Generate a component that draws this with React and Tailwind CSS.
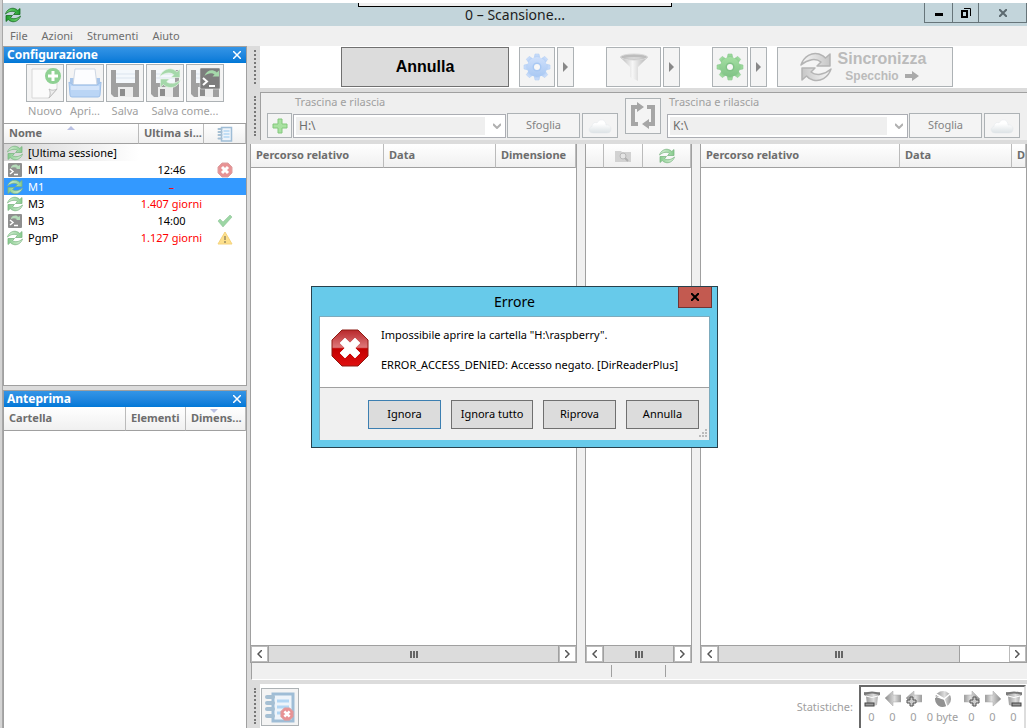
import { useId } from 'react'

const sessions = [
  { name: '[Ultima sessione]', kind: 'sync', when: '', status: '', tint: true },
  { name: 'M1', kind: 'batch', when: '12:46', status: 'error' },
  { name: 'M1', kind: 'sync', when: '–', late: true, status: '', selected: true },
  { name: 'M3', kind: 'sync', when: '1.407 giorni', late: true, status: '' },
  { name: 'M3', kind: 'batch', when: '14:00', status: 'ok' },
  { name: 'PgmP', kind: 'sync', when: '1.127 giorni', late: true, status: 'warn' },
]

const ARROW = 'M1 14C4 5 12 1 19 3C22 4 24 5 25.500 7L30 3V15H17L21 11C16 7 8 8 1 14Z'

function SyncIcon({ className, tone = 'green' }) {
  const id = useId()
  const colors = {
    green: ['#dcf2dc', '#86cb8c', '#79b480'],
    vivid: ['#7be07b', '#1f9a2c', '#14651d'],
    gray: ['#f8f8f8', '#c6c6c6', '#b4b4b4'],
  }[tone]
  return (
    <svg viewBox="0 0 32 32" className={className} aria-hidden="true">
      <defs>
        <linearGradient id={id} x1="0" y1="0" x2="1" y2="0">
          <stop offset="0" stopColor={colors[0]} />
          <stop offset="1" stopColor={colors[1]} />
        </linearGradient>
      </defs>
      <path d={ARROW} fill={`url(#${id})`} stroke={colors[2]} strokeWidth="1.500" strokeLinejoin="round" />
      <path d={ARROW} transform="rotate(180 16 16)" fill={`url(#${id})`} stroke={colors[2]} strokeWidth="1.500" strokeLinejoin="round" />
    </svg>
  )
}

function BatchIcon({ className }) {
  return (
    <svg viewBox="0 0 16 16" className={className} aria-hidden="true">
      <rect x="1" y="1" width="14" height="14" rx="1" fill="#8f8f8f" />
      <path d="M4 5C6 2 10 2 11 4L13 3V7H9L10 6C8 5 6 5 4 6Z" fill="#b4dbb9" />
      <path d="M3 7L6 9.500L3 12M7 12.500H11" fill="none" stroke="#fff" strokeWidth="1.500" />
    </svg>
  )
}

function FloppyIcon({ children }) {
  return (
    <svg viewBox="0 0 36 36" className="size-9" aria-hidden="true">
      <path d="M4 5H32V32H7L4 29Z" fill="#a0a0a0" />
      <path d="M9 5H28V18H9Z" fill="#f4f8fc" />
      <path d="M9 9H28M9 13H28" stroke="#dbe4ee" />
      <path d="M11 22H26V32H11Z" fill="#ececec" />
      <path d="M13 24H18V31H13Z" fill="#8d8d8d" />
      {children}
    </svg>
  )
}

function NewIcon() {
  return (
    <svg viewBox="0 0 36 36" className="size-9" aria-hidden="true">
      <path d="M5 4H30V24L22 33H5Z" fill="#fbfbfb" stroke="#d8d8d8" />
      <path d="M22 33C24 29 23 26 22 24C25 26 28 25 30 24Z" fill="#ededed" stroke="#bcbcbc" />
      <circle cx="26" cy="11" r="8" fill="#8fd193" />
      <path d="M26 6V16M21 11H31" stroke="#fff" strokeWidth="3" />
    </svg>
  )
}

function OpenIcon() {
  return (
    <svg viewBox="0 0 36 36" className="size-9" aria-hidden="true">
      <path d="M3 13H7V20H3ZM29 13H33V20H29Z" fill="#a9c6ea" />
      <path d="M8 4H28L30 20H6Z" fill="#fcfdff" stroke="#cfd8e4" />
      <path d="M2 17L6 20H30L34 17L33 30Q33 32 31 32H5Q3 32 3 30Z" fill="#bad5f5" stroke="#9dbfe8" />
      <path d="M4 21H32V25H4Z" fill="#d3e4fa" />
    </svg>
  )
}

function SaveSyncIcon() {
  return (
    <FloppyIcon>
      <g transform="translate(12 2) scale(0.7)" fill="#a5d8aa" stroke="#edf7ed">
        <path d={ARROW} />
        <path d={ARROW} transform="rotate(180 16 16)" />
      </g>
    </FloppyIcon>
  )
}

function SaveBatchIcon() {
  return (
    <FloppyIcon>
      <rect x="13" y="3" width="20" height="21" rx="1" fill="#7d7d7d" stroke="#eee" strokeWidth="0.500" />
      <g transform="translate(17 4) scale(0.5)" fill="#a5d8aa">
        <path d={ARROW} />
      </g>
      <path d="M16 13L20 16.500L16 20M22 21H28" fill="none" stroke="#fff" strokeWidth="2" />
    </FloppyIcon>
  )
}

function GearIcon({ tone }) {
  const id = useId()
  const [light, dark] = tone === 'blue' ? ['#cfe0fb', '#a8c8f3'] : ['#a4e0a2', '#80c286']
  return (
    <svg viewBox="0 0 28 28" className="size-7" aria-hidden="true">
      <defs>
        <linearGradient id={id} x1="0" y1="0" x2="0" y2="1">
          <stop offset="0" stopColor={light} />
          <stop offset="1" stopColor={dark} />
        </linearGradient>
      </defs>
      <g fill={`url(#${id})`} stroke={dark} strokeWidth="0.500">
        {[0, 45, 90, 135, 180, 225, 270, 315].map((a) => (
          <path key={a} d="M11 6L12 1H16L17 6Z" transform={`rotate(${a} 14 14)`} />
        ))}
        <circle cx="14" cy="14" r="10" stroke="none" />
      </g>
      <circle cx="14" cy="14" r="4.500" fill={dark} />
      <circle cx="14" cy="14" r="3" fill="#f8f8f8" />
    </svg>
  )
}

function FunnelIcon() {
  const id = useId()
  return (
    <svg viewBox="0 0 28 28" className="size-7" aria-hidden="true">
      <defs>
        <linearGradient id={id}>
          <stop offset="0" stopColor="#b5b5b5" />
          <stop offset="0.450" stopColor="#f6f6f6" />
          <stop offset="1" stopColor="#b0b0b0" />
        </linearGradient>
      </defs>
      <path d="M0 4L10 14V24L18 28V14L28 4Z" fill={`url(#${id})`} />
      <ellipse cx="14" cy="4" rx="13.500" ry="3" fill="#bdbdbd" stroke="#dadada" />
      <path d="M4 5Q14 3 24 5Q14 7 4 5Z" fill="#d8d8d8" />
    </svg>
  )
}

function CloudIcon() {
  const id = useId()
  return (
    <svg viewBox="0 0 24 16" className="h-4 w-6" aria-hidden="true">
      <defs>
        <linearGradient id={id} x1="0" y1="0" x2="0" y2="1">
          <stop offset="0.300" stopColor="#fff" />
          <stop offset="1" stopColor="#dce2e5" />
        </linearGradient>
      </defs>
      <path d="M5 15C0 15 0 9 4 8.500C4 5 7 4 9 5C11 0 18 1 18 7C24 6 25 15 19 15Z" fill={`url(#${id})`} stroke="#e2e7ea" strokeWidth="0.500" />
    </svg>
  )
}

function SwapIcon() {
  return (
    <svg viewBox="0 0 28 28" className="size-7" fill="#a6a6a6" aria-hidden="true">
      <path d="M2 3H8V0L15 5L8 10V7H6V20H9V24H2Z" />
      <path d="M26 24H20V27L13 22L20 17V20H22V7H18V3H26Z" />
    </svg>
  )
}

function ErrorBadge({ className }) {
  return (
    <svg viewBox="0 0 16 16" className={className} aria-hidden="true">
      <path d="M5 1H11L15 5V11L11 15H5L1 11V5Z" fill="#e89294" stroke="#dca0a1" />
      <path d="M5 5L11 11M11 5L5 11" stroke="#fff" strokeWidth="3" />
    </svg>
  )
}

function StatusIcon({ status }) {
  if (status === 'error') return <ErrorBadge className="mx-auto size-4" />
  if (status === 'ok') {
    return (
      <svg viewBox="0 0 16 16" className="mx-auto size-4" aria-hidden="true">
        <path d="M1 8L3 6L6 9L13 2L15 4L6 14Z" fill="#9cd6a4" stroke="#86bf90" strokeWidth="0.500" />
      </svg>
    )
  }
  if (status === 'warn') {
    return (
      <svg viewBox="0 0 16 16" className="mx-auto size-4" aria-hidden="true">
        <path d="M8 2L15 14H1Z" fill="#fde08c" stroke="#f5d37d" strokeLinejoin="round" />
        <path d="M8 6V10M8 11V13" stroke="#998b60" strokeWidth="1.500" />
      </svg>
    )
  }
  return null
}

function LogIcon({ className }) {
  return (
    <svg viewBox="0 0 32 32" className={className} aria-hidden="true">
      <path d="M9 3H29V30H9Z" fill="#eef4fa" stroke="#9fbdd6" strokeWidth="3" />
      <path d="M13 10H25M13 16H25M13 22H25" stroke="#b2d6f3" strokeWidth="3" />
      <path d="M3 6H9M3 12H9M3 18H9M3 25H9" stroke="#a5bfd3" strokeWidth="4" strokeLinecap="round" />
    </svg>
  )
}

function CameraIcon() {
  return (
    <svg viewBox="0 0 16 16" className="mx-auto size-4" aria-hidden="true">
      <path d="M0 3H6L7 4H16V14H0Z" fill="#d2d2d2" />
      <circle cx="8" cy="8" r="3" fill="#e4e4e4" stroke="#b8b8b8" />
      <path d="M10 10L13 13" stroke="#b0b0b0" strokeWidth="2" />
    </svg>
  )
}

function CloseX({ className, weight = 1.5 }) {
  return (
    <svg viewBox="0 0 8 8" className={className} fill="none" stroke="currentColor" strokeWidth={weight} aria-hidden="true">
      <path d="M0 0L8 8M8 0L0 8" />
    </svg>
  )
}

function Triangle({ className }) {
  return (
    <svg viewBox="0 0 8 4" className={className} fill="#b9c0e2" aria-hidden="true">
      <path d="M4 0L8 4H0Z" />
    </svg>
  )
}

function Grip() {
  return (
    <div className="flex w-[10px] shrink-0 justify-center py-1">
      <div className="border-l-2 border-dotted border-[#777]" />
    </div>
  )
}

function Caption({ children }) {
  return (
    <div className="flex h-4 shrink-0 items-center justify-between bg-linear-to-b from-[#3495e6] to-[#0078d7] pr-1 pl-[3px] text-white">
      <h2 className="text-xs font-bold">{children}</h2>
      <button aria-label="Chiudi"><CloseX className="m-px size-2" /></button>
    </div>
  )
}

function Th({ children, className = '' }) {
  return (
    <th className={`relative h-full overflow-hidden border-r border-b border-r-[#bbb] border-b-[#a0a0a0] bg-linear-to-b from-white to-[#f0f0f0] px-[5px] text-left text-[11px] font-bold whitespace-nowrap text-[#6d6d6d] ${className}`}>
      {children}
    </th>
  )
}

function ToolButton({ label, className = '', children }) {
  return (
    <button aria-label={label} className={`flex shrink-0 items-center justify-center border border-[#adb2b5] bg-[#f4f4f4] ${className}`}>
      {children}
    </button>
  )
}

function DropArrow({ label }) {
  return (
    <ToolButton label={label} className="ml-0.5 h-10 w-[17px]">
      <svg viewBox="0 0 5 10" className="h-2.5 w-[5px]" fill="#888" aria-hidden="true"><path d="M0 0L5 5L0 10Z" /></svg>
    </ToolButton>
  )
}

function FolderCombo({ value, label, className }) {
  return (
    <div className={`flex h-6 items-center border border-[#abadb3] bg-white p-0.5 ${className}`}>
      <select aria-label={label} className="h-full min-w-0 flex-1 appearance-none bg-[#efefef] pl-[3px] text-xs text-[#6d6d6d]" defaultValue={value}>
        <option>{value}</option>
      </select>
      <svg viewBox="0 0 8 6" className="mr-0.5 ml-2 h-1.5 w-2" fill="none" stroke="#b0b0b0" strokeWidth="2" aria-hidden="true">
        <path d="M0 1L4 5L8 1" />
      </svg>
    </div>
  )
}

function ScrollBar({ thumb = 'w-full' }) {
  const chevron = 'flex w-[17px] shrink-0 items-center justify-center border border-[#bbb] bg-white'
  return (
    <div className="flex h-[18px] shrink-0 border-y border-[#a0a0a0] bg-white">
      <button aria-label="Scorri a sinistra" className={chevron}>
        <svg viewBox="0 0 5 8" className="h-2 w-[5px]" fill="none" stroke="#555" strokeWidth="1.500"><path d="M5 0L1 4L5 8" /></svg>
      </button>
      <div className="min-w-0 flex-1">
        <div className={`flex h-full items-center justify-center gap-px border-x border-[#a0a0a0] bg-[#dcdcdc] ${thumb}`}>
          <span className="h-[7px] w-0.5 bg-[#666]" />
          <span className="h-[7px] w-0.5 bg-[#666]" />
          <span className="h-[7px] w-0.5 bg-[#666]" />
        </div>
      </div>
      <button aria-label="Scorri a destra" className={chevron}>
        <svg viewBox="0 0 5 8" className="h-2 w-[5px]" fill="none" stroke="#555" strokeWidth="1.500"><path d="M0 0L4 4L0 8" /></svg>
      </button>
    </div>
  )
}

function GridPane({ className, thumb, children }) {
  return (
    <section className={`flex flex-col border-x border-[#a0a0a0] bg-white ${className}`}>
      <table className="h-6 w-full table-fixed border-separate border-spacing-0">
        <thead><tr>{children}</tr></thead>
      </table>
      <div className="flex-1" />
      <ScrollBar thumb={thumb} />
    </section>
  )
}

function StatIcon({ kind }) {
  const id = useId()
  const left = kind.includes('left')
  return (
    <svg viewBox="0 0 16 16" className="size-4" aria-hidden="true">
      <defs>
        <linearGradient id={id}>
          <stop offset="0" stopColor="#8a8a8a" />
          <stop offset="0.600" stopColor="#dedede" />
          <stop offset="1" stopColor="#999" />
        </linearGradient>
      </defs>
      {kind.startsWith('bin') && (
        <>
          <path d="M0 1H16V4L14 5L13 14Q8 16 3 14L2 5L0 4Z" fill={`url(#${id})`} />
          <path d="M0 2Q8 -1 16 2V4Q8 1 0 4Z" fill="#777" />
          <path d="M2 5Q8 8 14 5" stroke="#fff" fill="none" />
          <rect x={left ? 1 : 6} y="12" width="9" height="3" fill="#999" stroke="#444" />
        </>
      )}
      {kind.startsWith('arrow') && (
        <path d="M0 7L8 0V4H16V11H8V15Z" transform={left ? undefined : 'rotate(180 8 7.500)'} fill={`url(#${id})`} stroke="#aaa" strokeWidth="0.500" />
      )}
      {kind.startsWith('add') && (
        <>
          <path d="M0 7L8 0V4H16V11H8V15Z" transform={left ? undefined : 'rotate(180 8 7.500)'} fill={`url(#${id})`} stroke="#aaa" strokeWidth="0.500" />
          <path d="M4 6H7V9H10V12H7V15H4V12H1V9H4Z" transform={left ? undefined : 'translate(5 0)'} fill="#ccc" stroke="#555" />
        </>
      )}
      {kind === 'pie' && (
        <>
          <circle cx="8" cy="8" r="8" fill={`url(#${id})`} />
          <path d="M0 6L9 8L15 3M9 8L12 16M1 3L9 8" stroke="#fff" fill="none" strokeWidth="1.500" />
          <path d="M1 6L9 9L11 15Q4 18 1 11Z" fill="#929292" />
        </>
      )}
    </svg>
  )
}

const stats = [
  { kind: 'bin-left', value: '0' },
  { kind: 'arrow-left', value: '0' },
  { kind: 'add-left', value: '0' },
  { kind: 'pie', value: '0 byte' },
  { kind: 'add-right', value: '0' },
  { kind: 'arrow-right', value: '0' },
  { kind: 'bin-right', value: '0' },
]

function TitleBar() {
  return (
    <header className="flex h-[26px] shrink-0 flex-col">
      <div className="h-[3px] bg-white" />
      <div className="relative grid flex-1 grid-cols-[1fr_auto_1fr] items-center bg-[#c3d5db]">
        <div className="absolute top-0 left-[355px] h-1 w-[314px] border-x border-b border-black bg-[#f0f0f0]" />
        <SyncIcon tone="vivid" className="ml-0.5 size-4" />
        <h1 className="text-sm text-[#1d1d1d]">0 – Scansione...</h1>
        <div className="flex h-5 justify-self-end self-start border border-t-0 border-[#67757a]">
          <button aria-label="Riduci" className="flex w-[27px] items-center justify-center pt-1"><span className="h-[3px] w-2 bg-black" /></button>
          <button aria-label="Ripristina" className="flex w-[27px] items-center justify-center border-x border-[#67757a]">
            <svg viewBox="0 0 10 10" className="size-2.5" fill="none" stroke="#000"><path d="M1 3H6V9H1Z" strokeWidth="2" /><path d="M3 0.500H9.500V8" /></svg>
          </button>
          <button aria-label="Chiudi finestra" className="flex w-[47px] items-center justify-center text-[#5c6a70]"><CloseX className="size-2" weight={2} /></button>
        </div>
      </div>
    </header>
  )
}

function Sidebar() {
  return (
    <aside className="flex w-[244px] shrink-0 flex-col">
      <section className="flex h-[340px] flex-col border border-[#a0a0a0] bg-white">
        <Caption>Configurazione</Caption>
        <div className="grid h-[61px] grid-cols-[repeat(5,38px)] grid-rows-[38px_18px] content-start justify-start gap-x-0.5 border-b border-[#a0a0a0] pt-px pl-[22px] text-center text-[11px] leading-[18px] text-[#a0a0a0]">
          <ToolButton label="Nuovo"><NewIcon /></ToolButton>
          <ToolButton label="Apri"><OpenIcon /></ToolButton>
          <ToolButton label="Salva"><FloppyIcon /></ToolButton>
          <ToolButton label="Salva come"><SaveSyncIcon /></ToolButton>
          <ToolButton label="Salva come processo batch"><SaveBatchIcon /></ToolButton>
          <span>Nuovo</span>
          <span>Apri...</span>
          <span>Salva</span>
          <span className="col-span-2">Salva come...</span>
        </div>
        <table className="w-full table-fixed border-separate border-spacing-0 text-[11px]">
          <thead>
            <tr className="h-5">
              <Th className="w-[135px]">Nome<Triangle className="absolute top-0.5 left-[63px] h-1 w-2" /></Th>
              <Th className="w-[65px]">Ultima si...</Th>
              <Th><LogIcon className="mx-auto size-4" /></Th>
            </tr>
          </thead>
          <tbody>
            {sessions.map((s, i) => (
              <tr key={i} className={`h-[17px] leading-4 ${s.selected ? 'bg-[#3399ff] text-white' : 'text-black'}`}>
                <td className={`p-0 pl-[3px] ${s.tint ? 'bg-linear-to-r from-[#d8d8d8] to-white' : ''}`}>
                  <div className="flex items-center gap-[5px]">
                    {s.kind === 'sync' ? <SyncIcon className="size-4 shrink-0" /> : <BatchIcon className="size-4 shrink-0" />}
                    <span className="whitespace-nowrap">{s.name}</span>
                  </div>
                </td>
                <td className={`p-0 text-center whitespace-nowrap ${s.late ? 'text-[#ff0000]' : ''}`}>{s.when}</td>
                <td className="p-0"><StatusIcon status={s.status} /></td>
              </tr>
            ))}
          </tbody>
        </table>
      </section>

      <section className="mt-1 flex flex-1 flex-col border border-b-0 border-[#a0a0a0] bg-white">
        <Caption>Anteprima</Caption>
        <table className="h-6 w-full table-fixed border-separate border-spacing-0">
          <thead>
            <tr>
              <Th className="w-[122px]">Cartella</Th>
              <Th className="w-[60px]">Elementi</Th>
              <Th>Dimens...<Triangle className="absolute top-0.5 left-6 h-1 w-2 rotate-180" /></Th>
            </tr>
          </thead>
        </table>
      </section>
    </aside>
  )
}

function TopBar() {
  return (
    <div className="flex h-[42px] shrink-0">
      <Grip />
      <div className="flex flex-1 items-center bg-white pl-[81px]">
        <button className="h-10 w-[168px] border border-[#707070] bg-[#dcdcdc] font-['Liberation_Sans'] text-base font-bold text-black">Annulla</button>
        <ToolButton label="Impostazioni di confronto" className="ml-2.5 h-10 w-9"><GearIcon tone="blue" /></ToolButton>
        <DropArrow label="Varianti di confronto" />
        <ToolButton label="Filtro" className="ml-8 h-10 w-[55px]"><FunnelIcon /></ToolButton>
        <DropArrow label="Opzioni filtro" />
        <ToolButton label="Impostazioni di sincronizzazione" className="ml-8 h-10 w-9"><GearIcon tone="green" /></ToolButton>
        <DropArrow label="Varianti di sincronizzazione" />
        <ToolButton className="ml-2.5 h-10 w-44 gap-1.5 pr-1 font-['Liberation_Sans'] font-bold text-[#bbb]">
          <SyncIcon tone="gray" className="size-8" />
          <span className="flex flex-col items-center">
            <span className="text-base leading-[18px]">Sincronizza</span>
            <span className="flex items-center gap-1.5 text-xs leading-4">
              Specchio
              <svg viewBox="0 0 14 10" className="h-2.5 w-3.5" fill="#aaa" aria-hidden="true"><path d="M0 3H7V0L14 5L7 10V7H0Z" /></svg>
            </span>
          </span>
        </ToolButton>
      </div>
    </div>
  )
}

function FolderBar() {
  return (
    <div className="mt-1 flex h-12 shrink-0">
      <Grip />
      <div className="flex flex-1 border-t border-l border-[#a0a0a0] bg-[#efefef] pl-1.5 text-xs">
        <div>
          <p className="h-5 pt-0.5 pl-7 text-[11px] text-[#a0a0a0]">Trascina e rilascia</p>
          <div className="flex items-center gap-px">
            <ToolButton label="Aggiungi coppia di cartelle" className="h-[25px] w-[25px]">
              <svg viewBox="0 0 16 16" className="size-4" aria-hidden="true"><path d="M6 1H10V6H15V10H10V15H6V10H1V6H6Z" fill="#a9e2a1" stroke="#83c87d" /></svg>
            </ToolButton>
            <FolderCombo value="H:\" label="Cartella sinistra" className="w-[213px]" />
            <ToolButton className="h-[25px] w-[73px] text-[11px] text-[#838383]">Sfoglia</ToolButton>
            <ToolButton label="Cloud sinistra" className="ml-px h-[25px] w-9"><CloudIcon /></ToolButton>
          </div>
        </div>
        <ToolButton label="Scambia i lati" className="mt-[5px] ml-[7px] size-9"><SwapIcon /></ToolButton>
        <div className="ml-1.5">
          <p className="h-5 pt-0.5 pl-0.5 text-[11px] text-[#a0a0a0]">Trascina e rilascia</p>
          <div className="flex items-center gap-px">
            <FolderCombo value="K:\" label="Cartella destra" className="w-[241px]" />
            <ToolButton className="h-[25px] w-[73px] text-[11px] text-[#838383]">Sfoglia</ToolButton>
            <ToolButton label="Cloud destra" className="ml-px h-[25px] w-9"><CloudIcon /></ToolButton>
          </div>
        </div>
      </div>
    </div>
  )
}

function BottomBar() {
  return (
    <footer className="mt-1 flex h-11 shrink-0">
      <Grip />
      <div className="flex flex-1 justify-between bg-white pl-px">
        <ToolButton label="Registro errori" className="relative mt-1 size-[38px]">
          <LogIcon className="size-8" />
          <ErrorBadge className="absolute right-1 bottom-1 size-3.5" />
        </ToolButton>
        <div className="mr-px flex gap-1.5 text-[11px] text-[#a0a0a0]">
          <p className="self-center pt-0.5">Statistiche:</p>
          <div className="mt-px flex border-2 border-b-0 border-[#696969] border-r-[#ddd] pt-1">
            {stats.map((s) => (
              <div key={s.kind} className={`flex flex-col items-center gap-0.5 leading-4 ${s.kind === 'pie' ? 'w-[37px]' : 'w-[21px]'}`}>
                <StatIcon kind={s.kind} />
                <span className="whitespace-nowrap">{s.value}</span>
              </div>
            ))}
          </div>
        </div>
      </div>
    </footer>
  )
}

function ErrorDialog() {
  const button = 'h-[29px] border bg-[#dcdcdc] text-black'
  return (
    <div role="dialog" aria-labelledby="dialog-title" className="absolute top-[286px] left-[311px] w-[407px] border border-[#27414d] bg-[#67caea] px-[7px] pb-[7px] text-[11px] text-black">
      <h2 id="dialog-title" className="h-[29px] text-center text-sm leading-[29px]">Errore</h2>
      <button aria-label="Chiudi errore" className="absolute top-0 right-[5px] flex h-[21px] w-[34px] items-center justify-center border border-t-0 border-[#703434] bg-[#c35a50]">
        <CloseX className="size-2" weight={2} />
      </button>
      <div className="border border-b-0 border-[#7dabbd] bg-white">
        <div className="flex h-[70px] gap-3 pt-2.5 pl-[11px]">
          <svg viewBox="0 0 38 38" className="mt-0.5 size-[38px] shrink-0" aria-hidden="true">
            <defs>
              <linearGradient id="stop" x1="0" y1="0" x2="0" y2="1">
                <stop offset="0" stopColor="#b8282b" />
                <stop offset="0.480" stopColor="#dd7779" />
                <stop offset="0.520" stopColor="#c30000" />
                <stop offset="1" stopColor="#df1010" />
              </linearGradient>
            </defs>
            <path d="M11 1H27L37 11V27L27 37H11L1 27V11Z" fill="url(#stop)" stroke="#8d1a12" />
            <path d="M9 14L14 9L19 14L24 9L29 14L24 19L29 24L24 29L19 24L14 29L9 24L14 19Z" fill="#fff" stroke="#f4eaea" strokeLinejoin="round" />
          </svg>
          <div className="leading-[15px]">
            <p>Impossibile aprire la cartella "H:\raspberry".</p>
            <p className="mt-[15px]">ERROR_ACCESS_DENIED: Accesso negato. [DirReaderPlus]</p>
          </div>
        </div>
        <div className="relative flex h-[53px] justify-end gap-2.5 border-t border-[#a0a0a0] bg-[#f0f0f0] pt-3 pr-2.5">
          <button className={`${button} w-[73px] border-[#3c7fb1]`}>Ignora</button>
          <button className={`${button} w-[82px] border-[#707070]`}>Ignora tutto</button>
          <button className={`${button} w-[73px] border-[#707070]`}>Riprova</button>
          <button className={`${button} w-[73px] border-[#707070]`}>Annulla</button>
          <svg viewBox="0 0 9 9" className="absolute right-0.5 bottom-0.5 size-[9px]" fill="#bbb" aria-hidden="true">
            <path d="M7 0h2v2h-2zM7 3h2v2h-2zM4 3h2v2h-2zM7 6h2v2h-2zM4 6h2v2h-2zM1 6h2v2h-2z" />
          </svg>
        </div>
      </div>
    </div>
  )
}

export default function App() {
  return (
    <div className="relative flex h-screen overflow-hidden bg-[#dcdcdc] font-['Noto_Sans',sans-serif]">
      <div className="w-[3px] shrink-0 border-r border-[#a8a8a8] bg-[#d4d4d4]" />
      <div className="flex min-w-0 flex-1 flex-col">
        <TitleBar />
        <nav className="flex h-5 shrink-0 items-center gap-3.5 bg-[#f0f0f0] pl-[7px] text-[11px] text-[#6d6d6d]">
          <button>File</button>
          <button>Azioni</button>
          <button>Strumenti</button>
          <button>Aiuto</button>
        </nav>
        <div className="flex min-h-0 flex-1">
          <Sidebar />
          <main className="ml-[3px] flex min-w-0 flex-1 flex-col">
            <TopBar />
            <FolderBar />
            <div className="mt-1 flex min-h-0 flex-1">
              <GridPane className="w-[327px] shrink-0">
                <Th className="w-[133px]">Percorso relativo</Th>
                <Th className="w-[112px]">Data</Th>
                <Th>Dimensione</Th>
              </GridPane>
              <div className="w-2 shrink-0 bg-[#f0f0f0]" />
              <GridPane className="w-[107px] shrink-0">
                <Th className="w-[18px]" />
                <Th className="w-[39px]"><CameraIcon /></Th>
                <Th><SyncIcon className="mx-auto size-4" /></Th>
              </GridPane>
              <div className="w-2 shrink-0 bg-[#f0f0f0]" />
              <GridPane className="min-w-0 flex-1" thumb="w-[83%]">
                <Th className="w-[199px]">Percorso relativo</Th>
                <Th className="w-[112px]">Data</Th>
                <Th>Di</Th>
              </GridPane>
            </div>
            <div className="ml-px flex h-[17px] shrink-0 border-b border-l border-[#a0a0a0] border-b-white bg-[#f0f0f0] py-0.5">
              <div className="w-[360px] border-r border-[#a0a0a0]" />
              <div className="w-[54px] border-r border-[#a0a0a0]" />
            </div>
            <BottomBar />
          </main>
        </div>
      </div>
      <ErrorDialog />
    </div>
  )
}
